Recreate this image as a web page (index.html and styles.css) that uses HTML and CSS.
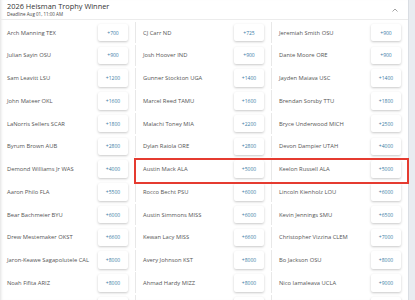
FILE: index.html
```html
<html>
    <head>
        <title>2026 Heisman Trophy Winner</title>
        <meta charset="utf-8">
        <link rel="stylesheet" href="styles.css">
    </head>
    <body>
        <div class="page">
            <div class="card">
                <div class="card-header">
                    <div>
                        <h4 class="title">2026 Heisman Trophy Winner</h4>
                        <div class="deadline">Deadline Aug 01, 11:00 AM</div>
                    </div>
                    <svg class="chevron" width="6" height="4" viewBox="0 0 6 4"><polyline points="0.5,3.5 3,1 5.5,3.5" fill="none" stroke="#9a9a9a" stroke-width="0.9"/></svg>
                </div>
                <div class="odds-grid">
                    <div class="cell"><span class="name">Arch Manning TEX</span><button class="odds">+700</button></div>
                    <div class="cell"><span class="name">CJ Carr ND</span><button class="odds">+725</button></div>
                    <div class="cell"><span class="name">Jeremiah Smith OSU</span><button class="odds">+900</button></div>

                    <div class="cell"><span class="name">Julian Sayin OSU</span><button class="odds">+900</button></div>
                    <div class="cell"><span class="name">Josh Hoover IND</span><button class="odds">+900</button></div>
                    <div class="cell"><span class="name">Dante Moore ORE</span><button class="odds">+900</button></div>

                    <div class="cell"><span class="name">Sam Leavitt LSU</span><button class="odds">+1200</button></div>
                    <div class="cell"><span class="name">Gunner Stockton UGA</span><button class="odds">+1400</button></div>
                    <div class="cell"><span class="name">Jayden Maiava USC</span><button class="odds">+1400</button></div>

                    <div class="cell"><span class="name">John Mateer OKL</span><button class="odds">+1600</button></div>
                    <div class="cell"><span class="name">Marcel Reed TAMU</span><button class="odds">+1600</button></div>
                    <div class="cell"><span class="name">Brendan Sorsby TTU</span><button class="odds">+1800</button></div>

                    <div class="cell"><span class="name">LaNorris Sellers SCAR</span><button class="odds">+1800</button></div>
                    <div class="cell"><span class="name">Malachi Toney MIA</span><button class="odds">+2200</button></div>
                    <div class="cell"><span class="name">Bryce Underwood MICH</span><button class="odds">+2500</button></div>

                    <div class="cell"><span class="name">Byrum Brown AUB</span><button class="odds">+2800</button></div>
                    <div class="cell"><span class="name">Dylan Raiola ORE</span><button class="odds">+2800</button></div>
                    <div class="cell"><span class="name">Devon Dampier UTAH</span><button class="odds">+4000</button></div>

                    <div class="cell"><span class="name">Demond Williams Jr WAS</span><button class="odds">+4000</button></div>
                    <div class="cell"><span class="name">Austin Mack ALA</span><button class="odds">+5000</button></div>
                    <div class="cell"><span class="name">Keelon Russell ALA</span><button class="odds">+5000</button></div>

                    <div class="cell"><span class="name">Aaron Philo FLA</span><button class="odds">+5500</button></div>
                    <div class="cell"><span class="name">Rocco Becht PSU</span><button class="odds">+6000</button></div>
                    <div class="cell"><span class="name">Lincoln Kienholz LOU</span><button class="odds">+6000</button></div>

                    <div class="cell"><span class="name">Bear Bachmeier BYU</span><button class="odds">+6000</button></div>
                    <div class="cell"><span class="name">Austin Simmons MISS</span><button class="odds">+6000</button></div>
                    <div class="cell"><span class="name">Kevin Jennings SMU</span><button class="odds">+6500</button></div>

                    <div class="cell"><span class="name">Drew Mestemaker OKST</span><button class="odds">+6600</button></div>
                    <div class="cell"><span class="name">Kewan Lacy MISS</span><button class="odds">+6600</button></div>
                    <div class="cell"><span class="name">Christopher Vizzina CLEM</span><button class="odds">+7000</button></div>

                    <div class="cell"><span class="name">Jaron-Keawe Sagapolutele CAL</span><button class="odds">+8000</button></div>
                    <div class="cell"><span class="name">Avery Johnson KST</span><button class="odds">+8000</button></div>
                    <div class="cell"><span class="name">Bo Jackson OSU</span><button class="odds">+8000</button></div>

                    <div class="cell"><span class="name">Noah Fifita ARIZ</span><button class="odds">+8000</button></div>
                    <div class="cell"><span class="name">Ahmad Hardy MIZZ</span><button class="odds">+8000</button></div>
                    <div class="cell"><span class="name">Nico Iamaleava UCLA</span><button class="odds">+9000</button></div>

                    <!-- next row, only the button tops show -->
                    <div class="cell"><span class="name"></span><button class="odds"></button></div>
                    <div class="cell"><span class="name"></span><button class="odds"></button></div>
                    <div class="cell"><span class="name"></span><button class="odds"></button></div>
                </div>
            </div>
            <div class="scroll-track"></div>
        </div>
        <!-- annotation drawn over the Alabama pair -->
        <div class="highlight"></div>
    </body>
</html>
```

FILE: styles.css
```css
body {
    margin: 0;
    font-family: 'Open Sans', 'Noto Sans', sans-serif;
    background: #fff;
    overflow: hidden;
    height: 300px;
}

.page {
    display: flex;
    height: 300px;
}

.card {
    width: 408px;
    flex: none;
    background: #fff;
    box-shadow: inset 3px 0 3px -2px rgba(0, 0, 0, 0.12);
}

.card-header {
    display: flex;
    justify-content: space-between;
    align-items: center;
    height: 18.5px;
    padding: 0 10px 0 7px;
    border-bottom: 1px solid #ececec;
}

.title {
    margin: 0;
    font-size: 7.4px;
    line-height: 9px;
    font-weight: 400;
    color: #333;
}

.deadline {
    font-size: 4.5px;
    line-height: 6px;
    color: #444;
}

.chevron {
    margin-top: 2px;
}

.odds-grid {
    display: grid;
    grid-template-columns: repeat(3, 136px);
    row-gap: 1.75px;
    padding-top: 2.5px;
}

.cell {
    display: flex;
    justify-content: space-between;
    align-items: center;
    padding: 1.75px 7px;
    border-right: 1px solid #e8e8e8;
}

.cell:nth-child(3n) {
    border-right: none;
}

.name {
    font-size: 5.8px;
    color: #555;
    white-space: nowrap;
}

.odds {
    width: 30px;
    height: 17.5px;
    padding: 0;
    border: none;
    border-radius: 2px;
    background: #fff;
    box-shadow: 0 1px 2.5px rgba(0, 0, 0, 0.22);
    font-family: 'Open Sans', 'Noto Sans', sans-serif;
    font-size: 5px;
    color: #3b7ca6;
}

.scroll-track {
    flex: 1;
    background: #e9ecf0;
    border-left: 1px solid #d9dde3;
}

.highlight {
    position: absolute;
    left: 134px;
    top: 158px;
    width: 271px;
    height: 22px;
    border: 2px solid #e53b30;
}
```
